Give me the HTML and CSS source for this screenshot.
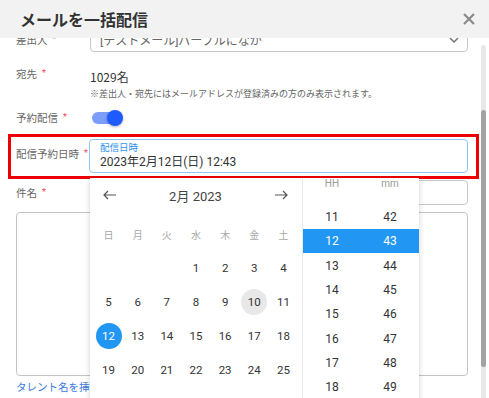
FILE: index.html
```html
<!DOCTYPE html>
<html>
<head>
<meta http-equiv="Content-Type" content="text/html; charset=UTF-8">
<meta name="viewport" content="width=device-width, initial-scale=1.0">
<title>メールを一括配信</title>
<link rel="stylesheet" href="styles.css">
</head>
<body>
<div class='dialog'>

<div class='dialog-title'>
    <span>メールを一括配信</span>
    <svg class='close' width='12' height='12' viewBox='0 0 12 12'><path d='M1 1L11 11M11 1L1 11'/></svg>
</div>

<div class='dialog-main'>
<div class='dialog-body'>

    <div class='row row-sender'>
        <div class='label'>差出人<span class='req'>*</span></div>
        <div class='select'>
            <span>[テストメール]パープルになか</span>
            <svg width='10' height='6' viewBox='0 0 10 6'><path d='M1 1L5 5L9 1'/></svg>
        </div>
    </div>

    <div class='row row-to'>
        <div class='label'>宛先<span class='req'>*</span></div>
        <div>
            <div class='count'>1029名</div>
            <div class='note'>※差出人・宛先にはメールアドレスが登録済みの方のみ表示されます。</div>
        </div>
    </div>

    <div class='row row-switch'>
        <div class='label'>予約配信<span class='req'>*</span></div>
        <div class='switch'><span class='track'></span><span class='knob'></span></div>
    </div>

    <div class='highlight'>
    <div class='row row-date'>
        <div class='label'>配信予約日時<span class='req'>*</span></div>
        <div class='date-field'>
            <div class='float-label'>配信日時</div>
            <div class='date-value'>2023年2月12日(日) 12:43</div>

            <div class='picker'>
                <div class='calendar'>
                    <div class='cal-nav'>
                        <svg width='14' height='10' viewBox='0 0 14 10'><path d='M13 5H1M5 1L1 5L5 9'/></svg>
                        <span class='cal-month'>2月 2023</span>
                        <svg width='14' height='10' viewBox='0 0 14 10'><path d='M1 5H13M9 1L13 5L9 9'/></svg>
                    </div>
                    <div class='cal-week'>
                        <span>日</span><span>月</span><span>火</span><span>水</span><span>木</span><span>金</span><span>土</span>
                    </div>
                    <div class='cal-days'>
                        <span></span><span></span><span></span>
                        <span><b>1</b></span><span><b>2</b></span><span><b>3</b></span><span><b>4</b></span>
                        <span><b>5</b></span><span><b>6</b></span><span><b>7</b></span><span><b>8</b></span>
                        <span><b>9</b></span><span><b class='today'>10</b></span><span><b>11</b></span>
                        <span><b class='selected'>12</b></span><span><b>13</b></span><span><b>14</b></span>
                        <span><b>15</b></span><span><b>16</b></span><span><b>17</b></span><span><b>18</b></span>
                        <span><b>19</b></span><span><b>20</b></span><span><b>21</b></span><span><b>22</b></span>
                        <span><b>23</b></span><span><b>24</b></span><span><b>25</b></span>
                        <span><b>26</b></span><span><b>27</b></span><span><b>28</b></span>
                    </div>
                </div>
                <div class='time'>
                    <div class='time-head'><span>HH</span><span>mm</span></div>
                    <div class='time-list'>
                        <div class='time-row'><span>10</span><span>41</span></div>
                        <div class='time-row'><span>11</span><span>42</span></div>
                        <div class='time-row active'><span>12</span><span>43</span></div>
                        <div class='time-row'><span>13</span><span>44</span></div>
                        <div class='time-row'><span>14</span><span>45</span></div>
                        <div class='time-row'><span>15</span><span>46</span></div>
                        <div class='time-row'><span>16</span><span>47</span></div>
                        <div class='time-row'><span>17</span><span>48</span></div>
                        <div class='time-row'><span>18</span><span>49</span></div>
                        <div class='time-row'><span>19</span><span>50</span></div>
                    </div>
                </div>
            </div>
        </div>
    </div>
    </div>

    <div class='row row-subject'>
        <div class='label'>件名<span class='req'>*</span></div>
        <div class='input'></div>
    </div>

    <textarea class='body-text'></textarea>

    <a class='insert-link' href='javascript:void(0)'>タレント名を挿入</a>

    <div class='actions'><span class='btn-send'></span></div>

</div>
<div class='scrollbar'><div class='thumb'></div></div>
</div>

</div>
</body>
</html>
```

FILE: styles.css
```css
html, body {
    margin: 0;
    padding: 0;
    width: 489px;
    height: 398px;
    overflow: hidden;
    background: #fff;
    font-family: Roboto, "Noto Sans CJK JP", sans-serif;
    color: #333;
}

.dialog {
    display: flex;
    flex-direction: column;
    height: 398px;
}

.dialog-title {
    height: 38px;
    flex: none;
    display: flex;
    align-items: center;
    justify-content: space-between;
    padding: 0 14px 0 20px;
    background: #f2f2f2;
    font-family: "Noto Sans CJK JP", sans-serif;
    font-size: 16px;
    font-weight: bold;
    color: #333;
}

.close path {
    stroke: #8a8a8a;
    stroke-width: 2.2;
    fill: none;
}

.dialog-main {
    flex: 1;
    display: flex;
    overflow: hidden;
}

.dialog-body {
    flex: 1;
    padding: 0 13px 0 16px;
}

.row {
    display: grid;
    grid-template-columns: 74px 1fr;
}

.label {
    font-size: 10.5px;
    line-height: 18px;
    color: #666;
}

.req {
    color: #f0464a;
    font-size: 9px;
    margin-left: 5px;
    vertical-align: 2px;
}

.row-sender {
    margin-top: -11px;
    align-items: center;
}

.row-sender .label {
    padding-top: 1px;
}

.select {
    height: 23px;
    border: 1px solid #c9c9c9;
    border-radius: 4px;
    display: flex;
    align-items: center;
    justify-content: space-between;
    padding: 0 8px 0 9px;
    font-size: 12px;
    color: #666;
}

.select path {
    stroke: #777;
    stroke-width: 1.5;
    fill: none;
}

.row-to {
    margin-top: 12px;
}

.count {
    padding-top: 3px;
    font-family: "Noto Sans CJK JP", sans-serif;
    font-size: 12px;
    line-height: 20px;
    color: #333;
}

.note {
    font-size: 9px;
    line-height: 14px;
    color: #666;
}

.row-switch {
    margin-top: 6px;
    align-items: center;
}

.row-switch .label {
    line-height: 20px;
}

.switch {
    position: relative;
    height: 20px;
    margin-left: 2px;
    display: flex;
    align-items: center;
}

.track {
    width: 28px;
    height: 12px;
    border-radius: 6px;
    background: #7c9ef8;
}

.knob {
    position: absolute;
    left: 15px;
    top: 2px;
    width: 16px;
    height: 16px;
    border-radius: 50%;
    background: #1e5bff;
    box-shadow: 0 1px 3px rgba(0,0,0,0.3);
}

.highlight {
    margin: 5px -11px 0 -8px;
    padding: 2px 8px 3px 5px;
    border: 3px solid #ee0000;
}

.row-date .label {
    padding-top: 5px;
}

.date-field {
    position: relative;
    margin-left: -1px;
    border: 1px solid #92c5f2;
    border-radius: 4px;
    padding: 1px 10px 2px 10px;
}

.float-label {
    font-size: 9.5px;
    line-height: 13px;
    color: #2e93ee;
}

.date-value {
    font-size: 12px;
    line-height: 16px;
    color: #333;
}

.picker {
    position: absolute;
    z-index: 2;
    left: 0;
    top: calc(100% + 6px);
    width: 329px;
    height: 240px;
    display: flex;
    background: #fff;
    box-shadow: 0 2px 6px rgba(0,0,0,0.18);
}

.calendar {
    width: 212px;
    flex: none;
}

.cal-nav {
    height: 34px;
    display: flex;
    align-items: center;
    justify-content: space-between;
    padding: 0 14px 0 13px;
}

.cal-nav path {
    stroke: #555;
    stroke-width: 1.2;
    fill: none;
}

.cal-month {
    font-size: 13px;
    color: #444;
}

.cal-week,
.cal-days {
    display: grid;
    grid-template-columns: repeat(7, 1fr);
    padding: 0 4px;
}

.cal-week {
    margin-top: 5px;
    height: 34px;
    align-items: center;
    text-align: center;
    font-size: 10px;
    color: #a8a8a8;
}

.cal-days span {
    height: 34px;
    display: flex;
    align-items: center;
    justify-content: center;
}

.cal-days b {
    width: 26px;
    height: 26px;
    border-radius: 50%;
    display: flex;
    align-items: center;
    justify-content: center;
    font-weight: normal;
    font-size: 11.5px;
    color: #333;
}

.cal-days b.today {
    background: #e8e8e8;
}

.cal-days b.selected {
    background: #2196f3;
    color: #fff;
}

.time {
    position: relative;
    flex: 1;
    border-left: 1px solid #e8e8e8;
    overflow: hidden;
}

.time-head {
    position: absolute;
    z-index: 1;
    top: 0;
    left: 0;
    right: 0;
    height: 18.6px;
    display: grid;
    grid-template-columns: 1fr 1fr;
    text-align: center;
    font-size: 10px;
    line-height: 12px;
    color: #9a9a9a;
    background: #fff;
}

.time-list {
    padding-top: 2.6px;
}

.time-row {
    height: 24.3px;
    display: grid;
    grid-template-columns: 1fr 1fr;
    align-items: center;
    text-align: center;
    font-size: 12px;
    color: #333;
}

.time-row.active {
    background: #2196f3;
    color: #fff;
}

.row-subject {
    margin-top: 1px;
    align-items: center;
}

.input {
    height: 23px;
    border: 1px solid #c9c9c9;
    border-radius: 4px;
}

.body-text {
    display: block;
    box-sizing: border-box;
    width: 100%;
    height: 164px;
    margin: 7px 0 0 0;
    border: 1px solid #c4c4c4;
    border-radius: 4px;
    resize: none;
}

.insert-link {
    display: block;
    margin-top: 4px;
    font-size: 10.5px;
    line-height: 16px;
    color: #3a7be0;
    text-decoration: none;
}

.actions {
    display: flex;
    justify-content: flex-end;
    margin-top: 2px;
}

.btn-send {
    width: 100px;
    height: 30px;
    border-radius: 4px;
    background: #2161f5;
}

.scrollbar {
    width: 5px;
    flex: none;
    margin: 7px 3px 0 0;
    background: #e8e8e8;
    border-radius: 3px 3px 0 0;
}

.thumb {
    margin-top: 65px;
    height: 257px;
    border-radius: 3px;
    background: #a3a3a3;
}
```
